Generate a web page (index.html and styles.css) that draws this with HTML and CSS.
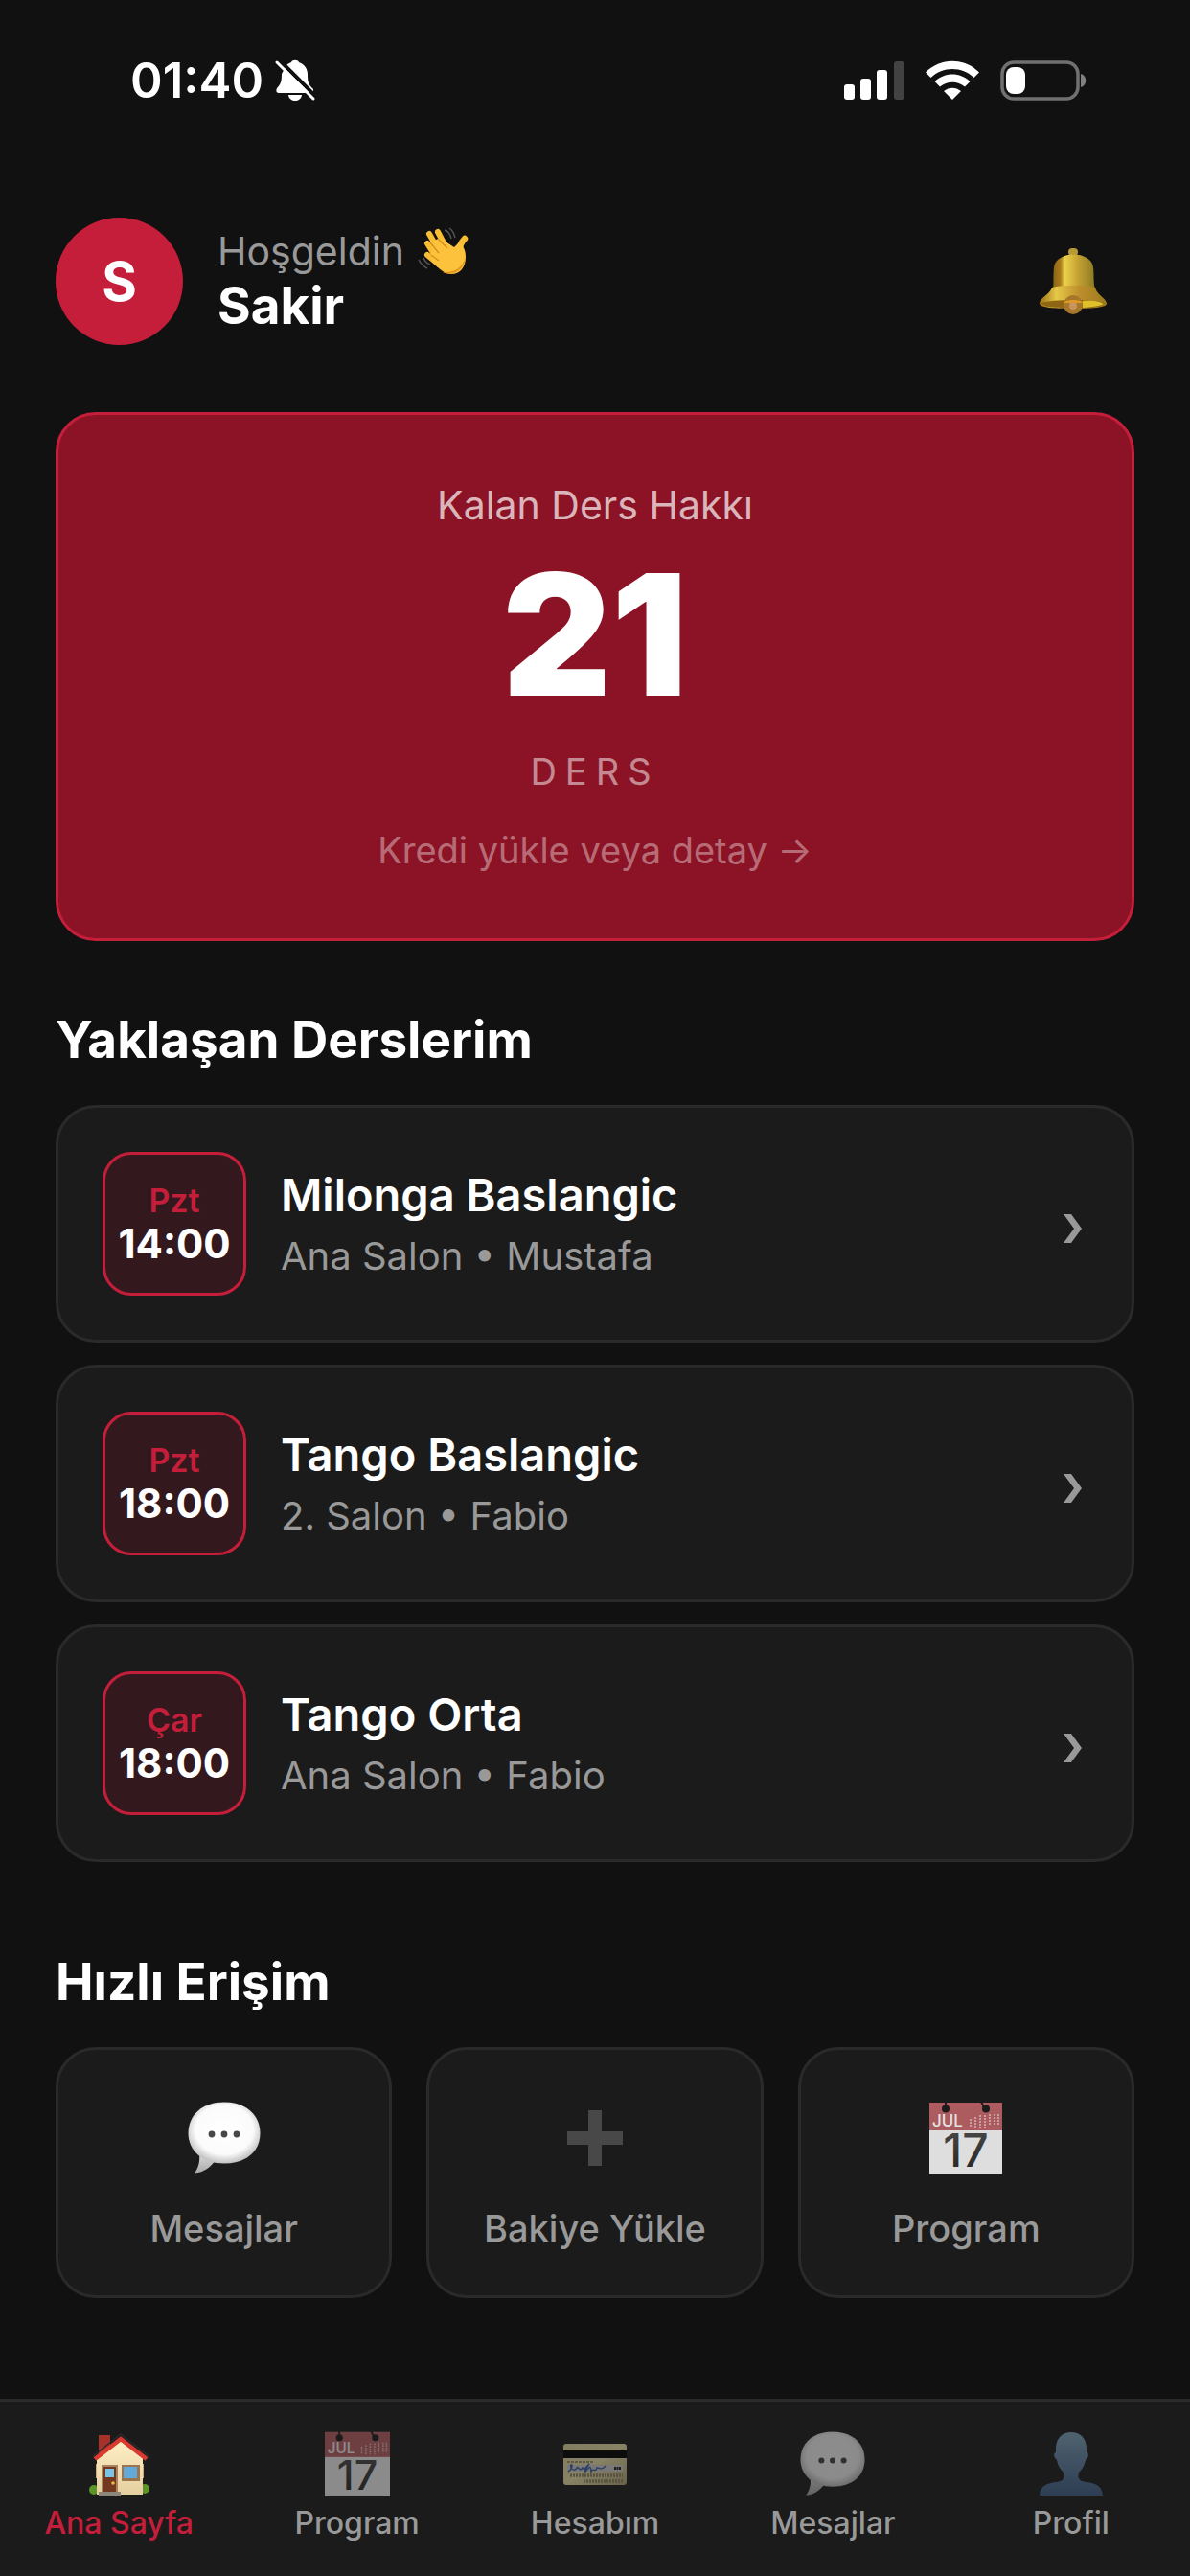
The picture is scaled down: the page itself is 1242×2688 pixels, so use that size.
FILE: index.html
```html
<!DOCTYPE html>
<html lang="tr">
<head>
<meta charset="UTF-8">
<meta name="viewport" content="width=device-width">
<title>Ana Sayfa</title>
	<link rel="stylesheet" href="styles.css">
</head>
<body>

	<!-- ortak ikonlar -->
	<svg class="defs" aria-hidden="true">
		<defs>
			<radialGradient id="bubbleFill" cx="50%" cy="45%" r="56%">
				<stop offset="0" stop-color="#fff"/>
				<stop offset="0.72" stop-color="#fbfbfb"/>
				<stop offset="1" stop-color="#bdbdbd"/>
			</radialGradient>
			<linearGradient id="tailFill" x1="0" y1="0" x2="0" y2="1">
				<stop offset="0" stop-color="#dadada"/>
				<stop offset="1" stop-color="#aaa"/>
			</linearGradient>
			<linearGradient id="inkFill" x1="0" y1="0" x2="0" y2="1">
				<stop offset="0" stop-color="#555"/>
				<stop offset="1" stop-color="#222"/>
			</linearGradient>
			<symbol id="bubble" viewBox="0 0 76 76">
				<path d="M12 54C13 63 11 69 7 74.500C17 74 24 68 29 61z" fill="url(#tailFill)"/>
				<path d="M38 .5C61 .5 75.500 14 75.500 33C75.500 52 61 64.500 38 64.500C15 64.500 .5 51 .5 33C.5 14 15 .5 38 .5z" fill="url(#bubbleFill)"/>
				<circle cx="25" cy="34" r="3.400" fill="#484848"/>
				<circle cx="38" cy="34" r="3.400" fill="#484848"/>
				<circle cx="51" cy="34" r="3.400" fill="#484848"/>
			</symbol>
			<symbol id="calendar" viewBox="0 0 76 76">
				<rect y="1" width="76" height="75" fill="#fafafa"/>
				<rect y="1" width="76" height="29" fill="#c06468"/>
				<path d="M0 75.500H76" stroke="#9a9a9a"/>
				<path d="M17 0V6M54 0L57 6" stroke="#1b1b1b" stroke-width="2"/>
				<circle cx="17" cy="7.500" r="4" fill="#1b1b1b"/>
				<circle cx="59" cy="7.500" r="4" fill="#1b1b1b"/>
				<path d="M43 18V27M48 16V27M53 14V27M58 14V27M63 13V24M68 13V24M72 13V24" stroke="#eccccd" stroke-width="1.500" stroke-dasharray="2 1"/>
				<text x="3" y="26" class="cal-month">JUL</text>
				<text x="38" y="68" class="cal-day" fill="url(#inkFill)">17</text>
			</symbol>
		</defs>
	</svg>

	<div class="status">
		<div class="status-left">
			<span class="clock">01:40</span>
			<svg width="42" height="46" viewBox="0 0 42 46" aria-hidden="true">
				<path d="M12 7C14 5 16 4.500 17 4C18 1 24 1 25 4C31 6 34 11 34 17C34 25 35 27 40 32V35C40 36 39 36 38 36H4C1 36 1 33 2 31C6 27 7 24 7 16z" fill="#fff"/>
				<path d="M14 38H28C27 46 15 46 14 38z" fill="#fff"/>
				<path d="M4 1L42 39" stroke="#111" stroke-width="4"/>
				<path d="M2 4L40 42" stroke="#fff" stroke-width="3" stroke-linecap="round"/>
			</svg>
		</div>
		<div class="status-right">
			<svg width="64" height="42" viewBox="0 0 64 42" aria-hidden="true">
				<rect x="1" y="25" width="11" height="16" rx="3" fill="#fff"/>
				<rect x="18" y="19" width="11" height="22" rx="3" fill="#fff"/>
				<rect x="35" y="10" width="11" height="31" rx="3" fill="#fff"/>
				<rect x="53" y="1" width="11" height="40" rx="3" fill="#424242"/>
			</svg>
			<svg width="56" height="42" viewBox="0 0 56 42" aria-hidden="true">
				<path d="M0 12.500C15-3.300 41-3.300 56 12.500L50.500 18C38 6 18 6 5.500 18z" fill="#fff"/>
				<path d="M9.500 22C20 12 36 12 46.500 22L41 27.500C33.500 21 22.500 21 15 27.500z" fill="#fff"/>
				<path d="M19 32C24.500 27.500 31.500 27.500 37 32L28 41z" fill="#fff"/>
			</svg>
			<svg width="90" height="42" viewBox="0 0 90 42" aria-hidden="true">
				<rect x="2" y="2" width="79" height="38" rx="12" fill="none" stroke="#707070" stroke-width="3.500"/>
				<rect x="6" y="7" width="20" height="28" rx="8" fill="#fff"/>
				<path d="M84 14C91 16 91 26 84 28z" fill="#808080"/>
			</svg>
		</div>
	</div>

	<main class="page">
		<header class="header">
			<div class="avatar">S</div>
			<div class="hello">
				<p class="hello-text">Hoşgeldin
					<svg width="54" height="50" viewBox="0 0 54 50" aria-hidden="true">
						<g fill="none" stroke="#f9bd33" stroke-linecap="round">
							<path d="M24 28L12 7M31 24L21 5M20 33L10 17M22 39L10 29" stroke-width="6"/>
							<path d="M43 28C43 20 45 16 49 12" stroke-width="6.500"/>
						</g>
						<path d="M14 16L23 11L38 21L43 16C47 18 50 24 50 31C50 42 44 49 35 49C28 49 23 44 15 36z" fill="#fcc23c"/>
						<path d="M26 47C37 52 50 44 50 30C47 43 38 48 26 47z" fill="#e3961c"/>
						<path d="M13 16L22 27M21 12L31 22M14 29L22 35" fill="none" stroke="#d9901d" stroke-width="1.500"/>
						<path d="M33 1C36 3 38 7 39 11M28 3C32 4 34 8 35 12M1 34C3 38 6 41 10 43M6 32C7 35 10 38 13 39" fill="none" stroke="#555" stroke-width="1.500"/>
					</svg>
				</p>
				<h1 class="name">Sakir</h1>
			</div>
			<button class="bell" type="button" aria-label="Bildirimler">
				<svg width="70" height="70" viewBox="0 0 70 70" aria-hidden="true">
					<defs>
						<linearGradient id="bellBody">
							<stop offset="0" stop-color="#8a6415"/>
							<stop offset="0.180" stop-color="#a97c1c"/>
							<stop offset="0.280" stop-color="#ecd24a"/>
							<stop offset="0.600" stop-color="#c4a033"/>
							<stop offset="1" stop-color="#8a7a20"/>
						</linearGradient>
						<linearGradient id="bellRim">
							<stop offset="0" stop-color="#9a7018"/>
							<stop offset="0.250" stop-color="#e6c847"/>
							<stop offset="0.600" stop-color="#bd8d2c"/>
							<stop offset="1" stop-color="#9a7c1d"/>
						</linearGradient>
					</defs>
					<rect x="30" y="0" width="10" height="8" rx="4" fill="#b79a35"/>
					<path d="M14 43C15 36 14 30 15 20C17 2 54 2 56 20C57 30 56 36 58 43z" fill="url(#bellBody)"/>
					<path d="M13 41C22 38 50 38 58 41C60 49 68 51 70 57C71 61 62 63 35 63C8 63-1 61 0 57C1 51 10 49 13 41z" fill="url(#bellRim)"/>
					<path d="M2 57C14 53 56 53 68 57C66 62 54 62 35 62C16 62 4 62 2 57z" fill="#8f6413"/>
					<path d="M45 55C56 54 64 56 67 58C62 61 54 61 45 62z" fill="#dfc02a"/>
					<circle cx="35" cy="59" r="10" fill="#a6762b"/>
					<path d="M25 57C27 53 43 53 45 57z" fill="#e09a1e"/>
					<circle cx="35" cy="60" r="4" fill="#c8955a"/>
				</svg>
			</button>
		</header>

		<a class="balance" href="#kredi">
			<span class="balance-label">Kalan Ders Hakkı</span>
			<span class="balance-count">21</span>
			<span class="balance-unit">DERS</span>
			<span class="balance-link">Kredi yükle veya detay →</span>
		</a>

		<section class="lessons">
			<h2 class="title">Yaklaşan Derslerim</h2>
			<div class="lesson-list">
				<a class="lesson" href="#ders-1">
					<span class="when"><span class="day">Pzt</span><span class="hour">14:00</span></span>
					<span class="info"><span class="lesson-name">Milonga Baslangic</span><span class="place">Ana Salon • Mustafa</span></span>
					<svg class="arrow" width="20" height="30" viewBox="0 0 20 30" aria-hidden="true"><path d="M0 0H8L19 15L8 30H0L11 15z"/></svg>
				</a>
				<a class="lesson" href="#ders-2">
					<span class="when"><span class="day">Pzt</span><span class="hour">18:00</span></span>
					<span class="info"><span class="lesson-name">Tango Baslangic</span><span class="place">2. Salon • Fabio</span></span>
					<svg class="arrow" width="20" height="30" viewBox="0 0 20 30" aria-hidden="true"><path d="M0 0H8L19 15L8 30H0L11 15z"/></svg>
				</a>
				<a class="lesson" href="#ders-3">
					<span class="when"><span class="day">Çar</span><span class="hour">18:00</span></span>
					<span class="info"><span class="lesson-name">Tango Orta</span><span class="place">Ana Salon • Fabio</span></span>
					<svg class="arrow" width="20" height="30" viewBox="0 0 20 30" aria-hidden="true"><path d="M0 0H8L19 15L8 30H0L11 15z"/></svg>
				</a>
			</div>
		</section>

		<section class="quick">
			<h2 class="title">Hızlı Erişim</h2>
			<div class="quick-list">
				<button class="quick-item" type="button">
					<svg class="quick-icon" viewBox="0 0 76 76" aria-hidden="true"><use href="#bubble"/></svg>
					Mesajlar
				</button>
				<button class="quick-item" type="button">
					<svg class="quick-icon" viewBox="0 0 76 76" aria-hidden="true"><path d="M31 9H45V31H67V45H45V67H31V45H9V31H31z" fill="#484848"/></svg>
					Bakiye Yükle
				</button>
				<button class="quick-item" type="button">
					<svg class="quick-icon dim" viewBox="0 0 76 76" aria-hidden="true"><use href="#calendar"/></svg>
					Program
				</button>
			</div>
		</section>
	</main>

	<nav class="tabbar">
		<a class="tab active" href="#ana-sayfa">
			<svg class="tab-icon" viewBox="0 0 68 68" aria-hidden="true">
				<defs>
					<linearGradient id="wall" x1="0" y1="0" x2="0" y2="1">
						<stop offset="0" stop-color="#fff0c6"/>
						<stop offset="1" stop-color="#e5cfa0"/>
					</linearGradient>
				</defs>
				<path d="M13 4H25V14L13 24z" fill="#a8322a"/>
				<rect x="10" y="34" width="50" height="15" fill="#cba779"/>
				<circle cx="8" cy="61" r="5" fill="#5c9427"/>
				<circle cx="61" cy="60" r="5" fill="#5c9427"/>
				<path d="M11 27L36 8L59 27V66H11z" fill="url(#wall)"/>
				<path d="M9 29L36 8L63 29" fill="none" stroke="#d9392f" stroke-width="4.500"/>
				<path d="M7 26L36 3L65 26" fill="none" stroke="#2b2b2e" stroke-width="1.500"/>
				<rect x="16" y="35" width="17" height="28" fill="#a88362"/>
				<rect x="18" y="37" width="13" height="26" fill="#743820"/>
				<rect x="20" y="39" width="9" height="9" fill="#79c3e6"/>
				<circle cx="28" cy="54" r="1.800" fill="#efb742"/>
				<rect x="37" y="35" width="19" height="17" fill="#9b7450"/>
				<rect x="39" y="37" width="14" height="12" fill="#63a9dc"/>
				<rect x="13" y="63" width="23" height="4" fill="#8c867b"/>
			</svg>
			Ana Sayfa
		</a>
		<a class="tab" href="#program">
			<svg class="tab-icon" viewBox="0 0 76 76" aria-hidden="true"><use href="#calendar"/></svg>
			Program
		</a>
		<a class="tab" href="#hesabim">
			<svg class="tab-icon" viewBox="0 0 68 68" aria-hidden="true">
				<defs>
					<linearGradient id="gold" x1="0" y1="0" x2="1" y2="1">
						<stop offset="0" stop-color="#e8dfa8"/>
						<stop offset="0.500" stop-color="#f3e9b0"/>
						<stop offset="1" stop-color="#b5a878"/>
					</linearGradient>
				</defs>
				<rect x="1" y="13" width="66" height="43" rx="3" fill="url(#gold)"/>
				<rect x="1" y="20" width="66" height="8" fill="#000"/>
				<path d="M5 32H33" stroke="#8c835c" stroke-width="1.500" stroke-dasharray="3 1"/>
				<rect x="5" y="35" width="58" height="7" fill="#d6d5d3"/>
				<path d="M6 42C10 40 11 34 9 35C7 38 13 43 15 38C17 36 18 43 21 38C23 42 25 36 28 34C24 40 22 42 24 42C28 38 29 34 30 42C33 37 34 44 36 38C38 37 40 42 45 36" fill="none" stroke="#3d64ad" stroke-width="1.500"/>
				<path d="M54 38.500H61" stroke="#222" stroke-width="3" stroke-dasharray="2 .5"/>
				<path d="M8 46H63M22 52H63" stroke="#978e68" stroke-width="3.500" stroke-dasharray="2 1"/>
			</svg>
			Hesabım
		</a>
		<a class="tab" href="#mesajlar">
			<svg class="tab-icon" viewBox="0 0 76 76" aria-hidden="true"><use href="#bubble"/></svg>
			Mesajlar
		</a>
		<a class="tab" href="#profil">
			<svg class="tab-icon" viewBox="0 0 68 68" aria-hidden="true">
				<defs>
					<linearGradient id="person" x1="0" y1="0" x2="0" y2="1">
						<stop offset="0" stop-color="#83aac2"/>
						<stop offset="1" stop-color="#41608c"/>
					</linearGradient>
				</defs>
				<path d="M34 1C44 1 50 8 50 18V22C53 23 52 28 49 30C48 36 45 40 42 43C41 47 41 50 45 52C53 54 66 53 67 67H1C2 53 15 54 23 52C27 50 27 47 26 43C23 40 20 36 19 30C16 28 15 23 18 22V18C18 8 24 1 34 1z" fill="url(#person)"/>
			</svg>
			Profil
		</a>
	</nav>

</body>
</html>
```
FILE: styles.css
```css
*{
	box-sizing: border-box;
}
body{
	margin: 0;
	min-height: 100vh;
	display: flex;
	flex-direction: column;
	background-color: #111;
	color: #fff;
	font-family: Inter, "Liberation Sans", sans-serif;
}
h1, h2, p{
	margin: 0;
}
a{
	color: inherit;
	text-decoration: none;
}
button{
	font: inherit;
	border: 0;
	padding: 0;
	background: none;
	cursor: pointer;
}
svg{
	flex: none;
}
.defs{
	position: absolute;
	width: 0;
	height: 0;
}

/* durum cubugu */
.status{
	display: flex;
	justify-content: space-between;
	align-items: center;
	padding: 54px 108px 0 136px;
}
.status-left{
	display: flex;
	align-items: center;
	gap: 12px;
}
.clock{
	font-size: 51px;
	line-height: 60px;
	font-weight: 600;
}
.status-right{
	display: flex;
	gap: 22px;
}

.page{
	padding: 113px 58px 105px;
}

/* ust kisim */
.header{
	display: flex;
	align-items: center;
	gap: 36px;
}
.avatar{
	width: 133px;
	height: 133px;
	border-radius: 50%;
	background-color: #c41e3a;
	display: flex;
	align-items: center;
	justify-content: center;
	font-size: 56px;
	font-weight: 700;
}
.hello{
	flex: 1;
}
.hello-text{
	display: flex;
	align-items: center;
	gap: 14px;
	color: #999;
	font-size: 41px;
	line-height: 50px;
}
.name{
	font-size: 53px;
	line-height: 64px;
	font-weight: 700;
}
.bell{
	display: flex;
	padding: 0 29px;
}

/* kalan ders karti */
.balance{
	display: flex;
	flex-direction: column;
	align-items: center;
	margin-top: 70px;
	padding: 69px;
	border: 3px solid #c41e3a;
	border-radius: 42px;
	background-color: #8b1325;
}
.balance-label{
	color: rgba(255,255,255,0.7);
	font-size: 41px;
	line-height: 50px;
}
.balance-count{
	margin-top: 10px;
	font-size: 176px;
	line-height: 200px;
	font-weight: 900;
}
.balance-unit{
	margin-top: 20px;
	color: rgba(255,255,255,0.5);
	font-size: 38px;
	line-height: 46px;
	letter-spacing: 9px;
}
.balance-link{
	margin-top: 36px;
	color: rgba(255,255,255,0.4);
	font-size: 38px;
	line-height: 46px;
}

.title{
	margin-bottom: 36px;
	font-size: 53px;
	line-height: 64px;
	font-weight: 700;
}

/* yaklasan dersler */
.lessons{
	margin-top: 71px;
}
.lesson-list{
	display: grid;
	gap: 23px;
}
.lesson{
	display: flex;
	align-items: center;
	gap: 36px;
	padding: 46px 51px 46px 46px;
	border: 3px solid #2a2a2a;
	border-radius: 42px;
	background-color: #1b1b1b;
}
.when{
	flex: none;
	width: 150px;
	height: 150px;
	display: flex;
	flex-direction: column;
	align-items: center;
	justify-content: center;
	border: 3px solid #c41e3a;
	border-radius: 30px;
	background-color: #33191e;
}
.day{
	color: #c41e3a;
	font-size: 34px;
	line-height: 42px;
	font-weight: 600;
}
.hour{
	font-size: 42px;
	line-height: 48px;
	font-weight: 700;
}
.info{
	flex: 1;
	display: flex;
	flex-direction: column;
	gap: 12px;
}
.lesson-name{
	font-size: 47px;
	line-height: 56px;
	font-weight: 600;
}
.place{
	color: #999;
	font-size: 40px;
	line-height: 48px;
}
.arrow{
	margin-top: 10px;
	fill: #999;
}

/* hizli erisim */
.quick{
	margin-top: 93px;
}
.quick-list{
	display: grid;
	grid-template-columns: repeat(3, 1fr);
	gap: 36px;
}
.quick-item{
	display: flex;
	flex-direction: column;
	align-items: center;
	gap: 33px;
	padding: 54px 12px 47px;
	border: 3px solid #2a2a2a;
	border-radius: 42px;
	background-color: #1b1b1b;
	color: #999;
	font-size: 38px;
	line-height: 46px;
	font-weight: 500;
}
.quick-icon{
	width: 76px;
	height: 76px;
}
.dim{
	opacity: 0.88;
}
.cal-month{
	font-size: 17px;
	fill: #fff;
}
.cal-day{
	font-size: 48px;
	text-anchor: middle;
}

/* alt menu */
.tabbar{
	margin-top: auto;
	display: grid;
	grid-template-columns: repeat(5, 1fr);
	padding: 31px 0 36px;
	border-top: 3px solid #2a2a2a;
	background-color: #1b1b1b;
}
.tab{
	display: flex;
	flex-direction: column;
	align-items: center;
	gap: 9px;
	color: #999;
	font-size: 32px;
	line-height: 38px;
	font-weight: 500;
}
.tab-icon{
	width: 68px;
	height: 68px;
	opacity: 0.5;
}
.active{
	color: #c41e3a;
}
.active .tab-icon{
	opacity: 1;
}
```
